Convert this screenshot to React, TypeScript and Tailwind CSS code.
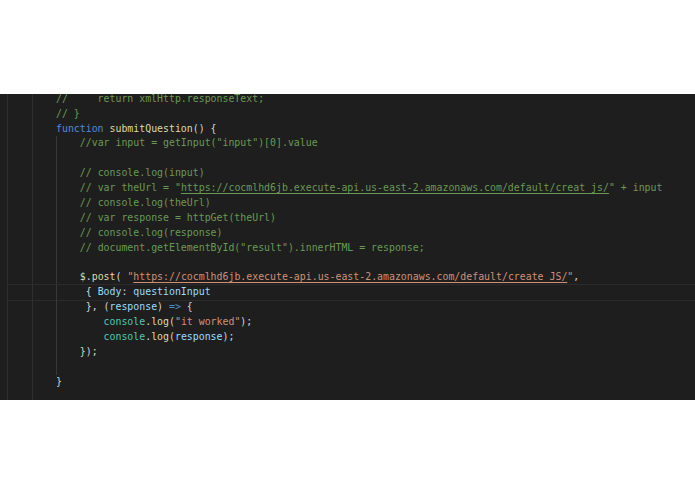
import React from "react";

type Tok = { t: string; c?: string; u?: boolean };

const CM = "text-[#6a9955]";
const KW = "text-[#4f8fcc]";
const FN = "text-[#dcdcaa]";
const PL = "text-[#d4d4d4]";
const ST = "text-[#ce9178]";
const VA = "text-[#9cdcfe]";
const CL = "text-[#4ec9b0]";

const URL1 = "https://cocmlhd6jb.execute-api.us-east-2.amazonaws.com/default/creat_js/";
const URL2 = "https://cocmlhd6jb.execute-api.us-east-2.amazonaws.com/default/create_JS/";

type Line = { g: number; toks: Tok[]; active?: boolean };

const lines: Line[] = [
  { g: 0, toks: [{ t: "//     return xmlHttp.responseText;", c: CM }] },
  { g: 0, toks: [{ t: "// }", c: CM }] },
  {
    g: 0,
    toks: [
      { t: "function", c: KW },
      { t: " " },
      { t: "submitQuestion", c: FN },
      { t: "() {", c: PL },
    ],
  },
  { g: 1, toks: [{ t: '//var input = getInput("input")[0].value', c: CM }] },
  { g: 1, toks: [] },
  { g: 1, toks: [{ t: "// console.log(input)", c: CM }] },
  {
    g: 1,
    toks: [
      { t: '// var theUrl = "', c: CM },
      { t: URL1, c: CM, u: true },
      { t: '" + input', c: CM },
    ],
  },
  { g: 1, toks: [{ t: "// console.log(theUrl)", c: CM }] },
  { g: 1, toks: [{ t: "// var response = httpGet(theUrl)", c: CM }] },
  { g: 1, toks: [{ t: "// console.log(response)", c: CM }] },
  { g: 1, toks: [{ t: '// document.getElementById("result").innerHTML = response;', c: CM }] },
  { g: 1, toks: [] },
  {
    g: 1,
    toks: [
      { t: "$", c: FN },
      { t: ".", c: PL },
      { t: "post", c: FN },
      { t: "( ", c: PL },
      { t: '"', c: ST },
      { t: URL2, c: ST, u: true },
      { t: '"', c: ST },
      { t: ",", c: PL },
    ],
  },
  {
    g: 2,
    active: true,
    toks: [
      { t: " { ", c: PL },
      { t: "Body", c: VA },
      { t: ": ", c: PL },
      { t: "questionInput", c: VA },
    ],
  },
  {
    g: 2,
    toks: [
      { t: " }, (", c: PL },
      { t: "response", c: VA },
      { t: ") ", c: PL },
      { t: "=>", c: KW },
      { t: " {", c: PL },
    ],
  },
  {
    g: 2,
    toks: [
      { t: "    " },
      { t: "console", c: CL },
      { t: ".", c: PL },
      { t: "log", c: FN },
      { t: "(", c: PL },
      { t: '"it worked"', c: ST },
      { t: ");", c: PL },
    ],
  },
  {
    g: 2,
    toks: [
      { t: "    " },
      { t: "console", c: CL },
      { t: ".", c: PL },
      { t: "log", c: FN },
      { t: "(", c: PL },
      { t: "response", c: VA },
      { t: ");", c: PL },
    ],
  },
  { g: 1, toks: [{ t: "});", c: PL }] },
  { g: 1, toks: [] },
  { g: 0, toks: [{ t: "}", c: PL }] },
];

function Gutter() {
  return (
    <>
      <div className="w-[7px] shrink-0" />
      <div className="w-[25px] shrink-0 border-l border-[#2e2e2e]" />
    </>
  );
}

export default function App() {
  return (
    <div
      className="w-[695px] h-[494px] bg-white flex flex-col"
      style={{ fontFamily: '"DejaVu Sans Mono", "Liberation Mono", monospace' }}
    >
      <div className="h-[94px] shrink-0" />
      <div className="h-[306px] shrink-0 bg-[#1e1e1e] overflow-hidden flex flex-col">
        <div className="flex flex-col -mt-[2.25px]">
          {lines.map((ln, i) => (
            <div key={i} className="flex h-[14.9px]">
              <div className="w-[7px] shrink-0" />
              <div
                className={
                  "flex flex-1 " +
                  (ln.active ? "border-y border-[#2b2b2b] -my-px h-[16.9px] items-center" : "")
                }
              >
                <div className="w-[25px] shrink-0 border-l border-[#2e2e2e] self-stretch" />
                <div className="flex-1 border-l border-[#2e2e2e] pl-[23px] self-stretch">
                  <div className="text-[9.9px] leading-[14.9px] whitespace-pre flex items-stretch h-[14.9px]">
                    {ln.g >= 1 && (
                      <span className="inline-block w-[23.8px] shrink-0 h-[14.9px] shadow-[inset_1px_0_0_#383838]" />
                    )}
                    {ln.g >= 2 && (
                      <span className="inline-block w-0 shrink-0 h-[14.9px] shadow-[inset_1px_0_0_#5a5a5a]" />
                    )}
                    <span>
                      {ln.toks.map((tk, j) => (
                        <span
                          key={j}
                          className={
                            (tk.c ?? PL) +
                            (tk.u ? " underline decoration-1 underline-offset-2" : "")
                          }
                        >
                          {tk.t}
                        </span>
                      ))}
                    </span>
                  </div>
                </div>
              </div>
            </div>
          ))}
        </div>
        <div className="flex flex-1">
          <Gutter />
          <div className="flex-1 border-l border-[#2e2e2e]" />
        </div>
      </div>
      <div className="flex-1" />
    </div>
  );
}
